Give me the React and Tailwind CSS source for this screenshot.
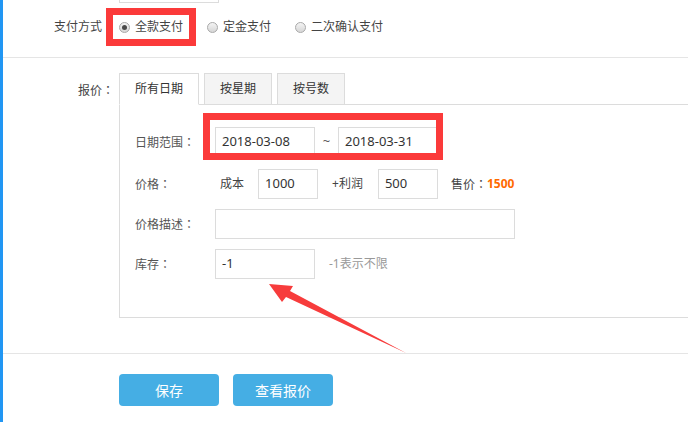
import React from "react";

const font = { fontFamily: '"Noto Sans", "Noto Sans CJK SC", sans-serif' };

// full-width colon centred in its box, as the original font draws it
function Colon() {
  return <span style={{ fontFamily: '"Noto Sans CJK JP", sans-serif' }}>：</span>;
}

function Radio({ checked, label }) {
  return (
    <label className="flex items-center gap-[5px] text-[12px] text-[#444]">
      <span className="w-[11px] h-[11px] rounded-full border border-[#a9a9a9] bg-gradient-to-b from-[#f4f4f4] to-[#d6d6d6] flex items-center justify-center">
        {checked && <span className="w-[5px] h-[5px] rounded-full bg-[#4a4a4a]" />}
      </span>
      {label}
    </label>
  );
}

function Field({ value, w }) {
  return (
    <div
      className={`${w} h-[30px] border border-[#dcdcdc] bg-white flex items-center pl-[6px] text-[13px] text-[#333]`}
    >
      {value}
    </div>
  );
}

export default function App() {
  return (
    <div
      style={font}
      className="relative w-[688px] h-[422px] overflow-hidden bg-white flex"
    >
      {/* left accent */}
      <div className="w-[3px] h-full bg-[#2196f3] shrink-0" />

      <div className="flex-1 flex flex-col">
        {/* stub of the field above */}
        <div className="ml-[116px] w-[100px] h-[3px] border-x border-b border-[#dcdcdc]" />

        {/* 支付方式 */}
        <div className="h-[54px] pb-[6px] flex items-center">
          <div className="w-[99px] text-right text-[12px] text-[#444]">支付方式</div>
          <div className="ml-[17px] flex items-center gap-[24px]">
            <Radio checked label="全款支付" />
            <Radio label="定金支付" />
            <Radio label="二次确认支付" />
          </div>
        </div>

        <div className="h-px bg-[#e5e5e5]" />

        {/* 报价 */}
        <div className="pt-[15px] flex">
          <div className="w-[111px] pt-[8px] text-right text-[12px] text-[#444]">
            报价<Colon />
          </div>
          <div className="ml-[5px] flex flex-col">
            <div className="flex gap-[5px] -mb-px relative z-10">
              <div className="w-[80px] h-[32px] border border-[#dcdcdc] border-b-white bg-white flex items-center justify-center text-[12px] text-[#333]">
                所有日期
              </div>
              <div className="w-[68px] h-[32px] border border-[#dcdcdc] bg-[#f4f4f4] flex items-center justify-center text-[12px] text-[#333]">
                按星期
              </div>
              <div className="w-[68px] h-[32px] border border-[#dcdcdc] bg-[#f4f4f4] flex items-center justify-center text-[12px] text-[#333]">
                按号数
              </div>
            </div>

            <div className="w-[620px] h-[214px] border border-[#dcdcdc] pl-[15px] pt-[22px] flex flex-col gap-[10px]">
              <div className="flex items-center mb-[2px]">
                <div className="w-[80px] text-[12px] text-[#555]">
                  日期范围<Colon />
                </div>
                <Field value="2018-03-08" w="w-[100px]" />
                <div className="w-[23px] text-center text-[13px] text-[#555]">~</div>
                <Field value="2018-03-31" w="w-[100px]" />
              </div>

              <div className="flex items-center">
                <div className="w-[80px] text-[12px] text-[#555]">
                  价格<Colon />
                </div>
                <span className="ml-[5px] mr-[14px] text-[12px] text-[#444]">成本</span>
                <Field value="1000" w="w-[60px]" />
                <span className="ml-[14px] mr-[15px] text-[12px] text-[#444]">+利润</span>
                <Field value="500" w="w-[60px]" />
                <span className="ml-[13px] text-[12px] text-[#444]">
                  售价<Colon />
                </span>
                <span className="text-[12px] font-bold text-[#ff6a00]">1500</span>
              </div>

              <div className="flex items-center">
                <div className="w-[80px] text-[12px] text-[#555]">
                  价格描述<Colon />
                </div>
                <Field value="" w="w-[300px]" />
              </div>

              <div className="flex items-center">
                <div className="w-[80px] text-[12px] text-[#555]">
                  库存<Colon />
                </div>
                <Field value="-1" w="w-[100px]" />
                <span className="ml-[14px] text-[12px] text-[#999]">-1表示不限</span>
              </div>
            </div>
          </div>
        </div>

        <div className="mt-[35px] h-px bg-[#e5e5e5]" />

        <div className="mt-[20px] ml-[116px] flex gap-[14px]">
          <button className="w-[100px] h-[32px] rounded-[4px] bg-[#45aee4] text-white text-[14px]">
            保存
          </button>
          <button className="w-[100px] h-[32px] rounded-[4px] bg-[#45aee4] text-white text-[14px]">
            查看报价
          </button>
        </div>
      </div>

      {/* annotations */}
      <div className="absolute left-[106px] top-[8px] w-[90px] h-[38px] border-[7px] border-[#fb3a3a]" />
      <div className="absolute left-[203px] top-[113px] w-[240px] h-[47px] border-[7px] border-[#fb3a3a]" />
      <svg className="absolute left-0 top-0" width="688" height="422" viewBox="0 0 688 422">
        <polygon
          points="269,284 293,286 290,291 406,353 286,297 282,302"
          fill="#f73c3c"
        />
      </svg>
    </div>
  );
}
